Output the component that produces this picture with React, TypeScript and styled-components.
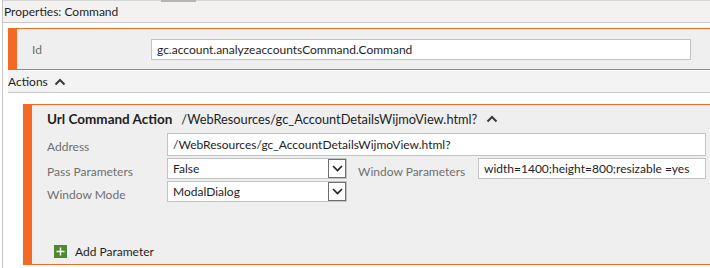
import React from 'react';
import styled, { createGlobalStyle } from 'styled-components';

const GlobalStyle = createGlobalStyle`
  html, body {
    margin: 0;
    padding: 0;
    background: #ffffff;
    font-family: Lato, "Open Sans", sans-serif;
    font-size: 12px;
    color: #1e1e1e;
  }
  #root {
    width: 710px;
    height: 268px;
    overflow: hidden;
  }
`;

const ORANGE = '#f26a24';

const Frame = styled.div`
  margin-left: 2px;
  border-left: 1px solid #c6c6c6;
  border-top: 1px solid #d6d6d6;
  height: 268px;
  box-sizing: border-box;
`;

const Header = styled.div`
  position: relative;
  height: 21px;
  background: #f3f2f1;
  border-bottom: 1px solid #c8c8c8;
  display: flex;
  align-items: center;
  padding-left: 1px;
  font-size: 12px;
  color: #1e1e1e;

  /* splitter grip sitting on the top edge */
  &::before {
    content: '';
    position: absolute;
    top: -1px;
    left: 158px;
    width: 35px;
    height: 2px;
    background: #b4b4b4;
  }
`;

const Body = styled.div`
  padding: 5px 0 0 5px;
`;

const Section = styled.div<{ indent?: number }>`
  margin-left: ${p => p.indent ?? 0}px;
  background: #efefef;
  border-top: 1px solid ${ORANGE};
  border-bottom: 1px solid ${ORANGE};
  border-left: 9px solid ${ORANGE};
`;

const IdRow = styled.div`
  height: 40px;
  display: grid;
  grid-template-columns: 119px 540px;
  align-items: center;
  padding-left: 15px;
`;

const Label = styled.div<{ drop?: number }>`
  color: #6f6f6f;
  font-size: 12px;
  white-space: nowrap;
  padding-top: ${p => p.drop ?? 0}px;
`;

const TextBox = styled.div<{ h?: number }>`
  height: ${p => p.h ?? 21}px;
  box-sizing: border-box;
  background: #ffffff;
  border: 1px solid #c3c3c3;
  display: flex;
  align-items: center;
  padding-left: 5px;
  font-size: 12px;
  color: #1e1e1e;
  white-space: nowrap;
  overflow: hidden;
`;

const ActionsBar = styled.div`
  margin-top: 1px;
  height: 21px;
  background: #f3f3f3;
  border-bottom: 1px solid #c8c8c8;
  display: flex;
  align-items: center;
  gap: 6px;
  font-size: 12px;
`;

const Spacer = styled.div<{ h: number }>`
  height: ${p => p.h}px;
`;

const ActionBox = styled.div`
  height: 159px;
  display: flex;
  flex-direction: column;
  padding-left: 15px;
`;

const TitleRow = styled.div`
  height: 28px;
  display: flex;
  align-items: center;
  gap: 9px;
  font-size: 12.8px;
`;

const Title = styled.span`
  font-weight: 700;
  font-size: 13.5px;
  color: #1e1e1e;
`;

const FormGrid = styled.div`
  display: grid;
  grid-template-columns: 120px 180px 11px 120px 228px;
  grid-template-rows: 23px 21px 21px;
  row-gap: 2px;
  align-items: center;
`;

const WideCell = styled.div`
  grid-column: 2 / 6;
`;

const Select = styled.div`
  height: 21px;
  box-sizing: border-box;
  background: #ffffff;
  border: 1px solid #c3c3c3;
  display: flex;
  align-items: center;
  justify-content: space-between;
  padding-left: 5px;
  font-size: 12px;
`;

const DropButton = styled.div`
  width: 18px;
  height: 19px;
  box-sizing: border-box;
  border: 1px solid #6e6e6e;
  background: #ffffff;
  display: flex;
  align-items: center;
  justify-content: center;
`;

const AddRow = styled.div`
  margin-top: auto;
  margin-bottom: 5px;
  margin-left: 7px;
  display: flex;
  align-items: center;
  gap: 8px;
  font-size: 12px;
  color: #1e1e1e;
`;

const PlusBox = styled.div`
  width: 13px;
  height: 13px;
  background: #4f8a32;
  display: flex;
  align-items: center;
  justify-content: center;
`;

const Caret: React.FC = () => (
  <svg width="12" height="8" viewBox="0 0 12 8">
    <polyline points="1.5,6.5 6,2 10.5,6.5" fill="none" stroke="#3a3a3a" strokeWidth="2" />
  </svg>
);

const DownCaret: React.FC = () => (
  <svg width="11" height="7" viewBox="0 0 11 7">
    <polyline points="1,1 5.5,5.5 10,1" fill="none" stroke="#1e1e1e" strokeWidth="1.6" />
  </svg>
);

const Dropdown: React.FC<{ value: string }> = ({ value }) => (
  <Select>
    <span>{value}</span>
    <DropButton>
      <DownCaret />
    </DropButton>
  </Select>
);

export default function App() {
  return (
    <>
      <GlobalStyle />
      <Frame>
        <Header>Properties: Command</Header>
        <Body>
          <Section>
            <IdRow>
              <Label>Id</Label>
              <TextBox>gc.account.analyzeaccountsCommand.Command</TextBox>
            </IdRow>
          </Section>
          <ActionsBar>
            Actions <Caret />
          </ActionsBar>
          <Spacer h={11} />
          <Section indent={15}>
            <ActionBox>
              <TitleRow>
                <Title>Url Command Action</Title>
                <span>/WebResources/gc_AccountDetailsWijmoView.html?</span>
                <Caret />
              </TitleRow>
              <FormGrid>
                <Label drop={4}>Address</Label>
                <WideCell>
                  <TextBox h={23}>/WebResources/gc_AccountDetailsWijmoView.html?</TextBox>
                </WideCell>
                <Label drop={6}>Pass Parameters</Label>
                <Dropdown value="False" />
                <div />
                <Label drop={6}>Window Parameters</Label>
                <TextBox>width=1400;height=800;resizable =yes</TextBox>
                <Label drop={6}>Window Mode</Label>
                <Dropdown value="ModalDialog" />
              </FormGrid>
              <AddRow>
                <PlusBox>
                  <svg width="9" height="9" viewBox="0 0 9 9">
                    <path d="M4.5 0.5v8M0.5 4.5h8" stroke="#ffffff" strokeWidth="1.4" />
                  </svg>
                </PlusBox>
                Add Parameter
              </AddRow>
            </ActionBox>
          </Section>
        </Body>
      </Frame>
    </>
  );
}
